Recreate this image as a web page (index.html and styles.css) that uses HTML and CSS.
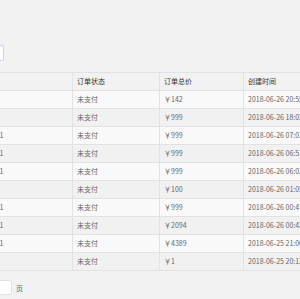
FILE: index.html
```html
<!DOCTYPE html>
<html lang="zh">
<head>
<meta charset="utf-8">
<link rel="stylesheet" href="styles.css">
</head>
<body>
<div class="page">
  <div class="toolbar">
    <span class="btn"></span>
  </div>
  <table class="grid">
    <thead>
      <tr><th class="c1">用户</th><th class="c2">订单状态</th><th class="c3">订单总价</th><th class="c4">创建时间</th></tr>
    </thead>
    <tbody>
      <tr><td class="c1">张三</td><td>未支付</td><td>￥142</td><td>2018-06-26 20:55:12</td></tr>
      <tr><td class="c1">李四</td><td>未支付</td><td>￥999</td><td>2018-06-26 18:02:41</td></tr>
      <tr><td class="c1">1381234567801</td><td>未支付</td><td>￥999</td><td>2018-06-26 07:03:22</td></tr>
      <tr><td class="c1">1381234567801</td><td>未支付</td><td>￥999</td><td>2018-06-26 06:51:09</td></tr>
      <tr><td class="c1">1381234567801</td><td>未支付</td><td>￥999</td><td>2018-06-26 06:02:37</td></tr>
      <tr><td class="c1">王五</td><td>未支付</td><td>￥100</td><td>2018-06-26 01:05:44</td></tr>
      <tr><td class="c1">1381234567801</td><td>未支付</td><td>￥999</td><td>2018-06-26 00:47:18</td></tr>
      <tr><td class="c1">1381234567801</td><td>未支付</td><td>￥2094</td><td>2018-06-26 00:42:56</td></tr>
      <tr><td class="c1">1381234567801</td><td>未支付</td><td>￥4389</td><td>2018-06-25 21:06:33</td></tr>
      <tr><td class="c1">赵六</td><td>未支付</td><td>￥1</td><td>2018-06-25 20:12:08</td></tr>
    </tbody>
  </table>
  <div class="pager">
    <span class="jump"></span>
    <span class="unit">页</span>
  </div>
</div>
</body>
</html>
```

FILE: styles.css
```css
html, body {
  margin: 0;
  padding: 0;
  background: #f2f2f2;
}
.page {
  font-family: "Noto Sans CJK SC", "Noto Sans", sans-serif;
  font-size: 7px;
  color: #666;
  overflow: hidden;
  width: 300px;
  height: 299px;
}
.toolbar {
  height: 72px;
  padding-top: 45px;
  box-sizing: border-box;
}
.btn {
  display: block;
  width: 40px;
  height: 14px;
  margin-left: -38px;
  border: 1px solid #c4d9f7;
  border-radius: 2px;
  background: #fff;
}
.grid {
  border-collapse: collapse;
  table-layout: fixed;
  margin-left: -52px;
  width: 400px;
}
.grid th, .grid td {
  height: 17px;
  padding: 0 0 0 4px;
  text-align: left;
  white-space: nowrap;
  overflow: hidden;
  border: 1px solid #e2e2e2;
  line-height: 17px;
  box-sizing: border-box;
}
.grid th {
  font-weight: normal;
  color: #333;
  background: #f2f2f2;
}
.grid .c1 { width: 124px; }
.grid .c2 { width: 87px; }
.grid .c3 { width: 84px; }
.grid .c4 { width: 105px; }
.grid tbody tr:nth-child(odd) td { background: #f9f9f9; }
.grid tbody tr:nth-child(even) td { background: #f1f1f1; }
.pager {
  display: flex;
  align-items: center;
  gap: 4px;
  margin-top: 9px;
  margin-left: -30px;
}
.jump {
  display: block;
  width: 40px;
  height: 13px;
  border: 1px solid #e2e2e2;
  border-radius: 2px;
  background: #fff;
}
.unit {
  color: #666;
}
```
